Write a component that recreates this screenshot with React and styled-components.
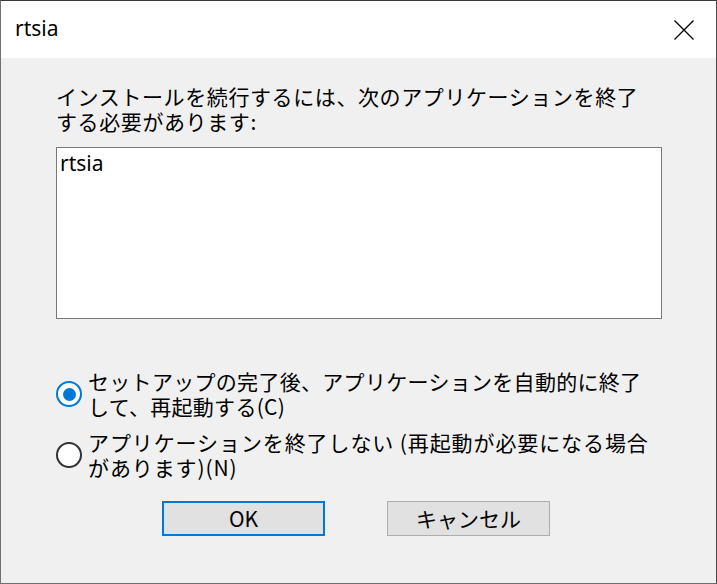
import React from "react";
import styled, { createGlobalStyle } from "styled-components";

const Global = createGlobalStyle`
  html, body { margin: 0; padding: 0; background: #f0f0f0; }
  body { font-family: "Noto Sans", "Noto Sans CJK JP", sans-serif; color: #000; }
`;

const Window = styled.div`
  width: 717px;
  height: 584px;
  box-sizing: border-box;
  border-top: 1px solid #3a3a3a;
  border-right: 1px solid #4a4a4a;
  border-left: 1px solid #707070;
  border-bottom: 1px solid #707070;
  display: flex;
  flex-direction: column;
  background: #f0f0f0;
  overflow: hidden;
`;

const TitleBar = styled.div`
  height: 57px;
  flex: none;
  background: #fff;
  display: flex;
  align-items: center;
  justify-content: space-between;
  padding-left: 14px;
  padding-right: 22px;
`;

const Title = styled.span`
  font-family: "Noto Sans", sans-serif;
  font-size: 21px;
  line-height: 1;
  margin-top: -2px;
`;

const CloseIcon = styled.svg`
  width: 20px;
  height: 20px;
  display: block;
`;

const Body = styled.div`
  flex: 1;
  display: flex;
  flex-direction: column;
  padding: 26px 0 0 55px;
`;

const Message = styled.p`
  margin: 0;
  font-family: "Noto Sans CJK JP", sans-serif;
  font-size: 21px;
  line-height: 25px;
  letter-spacing: 0.6px;
  white-space: nowrap;
`;

const ListBox = styled.div`
  margin-top: 13px;
  width: 606px;
  height: 172px;
  box-sizing: border-box;
  border: 1px solid #7a7a7a;
  background: #fff;
  padding: 3px 3px;
`;

const ListItem = styled.div`
  font-family: "Noto Sans", sans-serif;
  font-size: 21px;
  line-height: 25px;
`;

const Options = styled.div`
  margin-top: 50px;
  display: flex;
  flex-direction: column;
  gap: 11px;
`;

const Option = styled.label`
  display: flex;
  align-items: center;
  gap: 6px;
`;

const RadioCircle = styled.span`
  width: 26px;
  height: 26px;
  box-sizing: border-box;
  border-radius: 50%;
  border: 2px solid ${(p) => (p.$checked ? "#0078d7" : "#333")};
  background: #fff;
  display: flex;
  align-items: center;
  justify-content: center;
  flex: none;
  &::after {
    content: "";
    width: 13px;
    height: 13px;
    border-radius: 50%;
    background: #0078d7;
    display: ${(p) => (p.$checked ? "block" : "none")};
  }
`;

const OptionText = styled.span`
  font-family: "Noto Sans CJK JP", sans-serif;
  font-size: 21px;
  line-height: 25px;
  letter-spacing: ${(p) => p.$spacing || "0.3px"};
  white-space: nowrap;
`;

const Buttons = styled.div`
  margin-top: 21px;
  display: flex;
  padding-left: 106px;
  gap: 62px;
`;

const Button = styled.button`
  width: 163px;
  height: 35px;
  box-sizing: border-box;
  background: #e1e1e1;
  border: ${(p) => (p.$default ? "2px solid #0078d7" : "1px solid #adadad")};
  font-family: "Noto Sans CJK JP", sans-serif;
  font-size: 21px;
  line-height: 1;
  color: #000;
  padding: 0;
  display: flex;
  align-items: center;
  justify-content: center;
`;

export default function App() {
  return (
    <>
      <Global />
      <Window>
        <TitleBar>
          <Title>rtsia</Title>
          <CloseIcon viewBox="0 0 20 20">
            <path d="M0.5 0.5 L19.5 19.5 M19.5 0.5 L0.5 19.5" stroke="#000" strokeWidth="1.3" fill="none" />
          </CloseIcon>
        </TitleBar>
        <Body>
          <Message>
            インストールを続行するには、次のアプリケーションを終了
            <br />
            する必要があります:
          </Message>
          <ListBox>
            <ListItem>rtsia</ListItem>
          </ListBox>
          <Options>
            <Option>
              <RadioCircle $checked />
              <OptionText>
                セットアップの完了後、アプリケーションを自動的に終了
                <br />
                して、再起動する(C)
              </OptionText>
            </Option>
            <Option>
              <RadioCircle />
              <OptionText $spacing="0.9px">
                アプリケーションを終了しない (再起動が必要になる場合
                <br />
                があります)(N)
              </OptionText>
            </Option>
          </Options>
          <Buttons>
            <Button $default>OK</Button>
            <Button>キャンセル</Button>
          </Buttons>
        </Body>
      </Window>
    </>
  );
}
